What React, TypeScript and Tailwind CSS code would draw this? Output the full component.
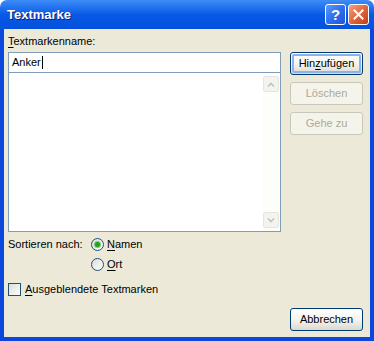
import React from 'react';

const font = { fontFamily: '"Liberation Sans", Arial, sans-serif' };

function XpButton({ label, accessIdx, disabled, isDefault }: { label: string; accessIdx?: number; disabled?: boolean; isDefault?: boolean }) {
  const text =
    accessIdx === undefined ? (
      label
    ) : (
      <>
        {label.slice(0, accessIdx)}
        <span className="underline underline-offset-2">{label[accessIdx]}</span>
        {label.slice(accessIdx + 1)}
      </>
    );
  if (disabled) {
    return (
      <div className="h-[23px] w-[73px] rounded-[3px] border border-[#c9c7ba] bg-[#f5f4ea] flex items-center justify-center text-[11px] text-[#aca899]">
        {text}
      </div>
    );
  }
  return (
    <div className="h-[23px] w-[73px] rounded-[3px] border border-[#003c74] bg-gradient-to-b from-[#ffffff] via-[#f5f4f0] to-[#dcd9cd] p-[1px]">
      <div
        className={`h-full w-full rounded-[2px] flex items-center justify-center text-[11px] text-black ${
          isDefault ? 'border-2 border-[#8fb0ea]' : ''
        }`}
      >
        {text}
      </div>
    </div>
  );
}

function Radio({ checked }: { checked?: boolean }) {
  return (
    <div className="w-[13px] h-[13px] rounded-full border border-[#1c5180] bg-gradient-to-br from-[#dcdcd7] to-[#ffffff] flex items-center justify-center">
      {checked && <div className="w-[5px] h-[5px] rounded-full bg-[#21a121] shadow-[0_0_0_1px_#6fd06f]" />}
    </div>
  );
}

function ScrollArrow({ up }: { up?: boolean }) {
  return (
    <div className="h-[16px] w-[16px] rounded-[2px] border border-[#e6e6de] bg-[#f4f4ef] flex items-center justify-center">
      <svg width="8" height="5" viewBox="0 0 8 5">
        <path
          d={up ? 'M1 4.5L4 1.5L7 4.5' : 'M1 0.5L4 3.5L7 0.5'}
          fill="none"
          stroke="#c3c3bc"
          strokeWidth="1.6"
        />
      </svg>
    </div>
  );
}

export default function App() {
  return (
    <div className="w-[374px] h-[341px] flex flex-col select-none" style={font}>
      {/* Title bar */}
      <div className="h-[29px] rounded-t-[7px] bg-gradient-to-b from-[#3d8cf7] via-[#0859e6] to-[#0451dc] flex items-center pl-[7px] pr-[5px]">
        <span className="text-white font-bold text-[13px] [text-shadow:1px_1px_#0a1c7a]">Textmarke</span>
        <div className="ml-auto flex gap-[2px]">
          <div className="w-[21px] h-[21px] rounded-[3px] border border-white bg-gradient-to-br from-[#5a9bff] via-[#2e6ff0] to-[#1f55d6] flex items-center justify-center">
            <span className="text-white font-bold text-[15px] leading-none">?</span>
          </div>
          <div className="w-[21px] h-[21px] rounded-[3px] border border-white bg-gradient-to-br from-[#f0a283] via-[#e2653e] to-[#c23c16] flex items-center justify-center">
            <svg width="11" height="11" viewBox="0 0 11 11">
              <path d="M1.5 1.5L9.5 9.5M9.5 1.5L1.5 9.5" stroke="white" strokeWidth="2" strokeLinecap="square" />
            </svg>
          </div>
        </div>
      </div>

      {/* Body */}
      <div className="flex-1 border-x-4 border-b-4 border-[#0a47dc] bg-[#ece9d8] flex pl-[4px] pr-[7px] pt-[6px] pb-[6px] text-[11px] text-black">
        {/* Left column */}
        <div className="w-[273px] flex flex-col">
          <div className="h-[13px] leading-[13px]">
            <span className="underline underline-offset-2">T</span>extmarkenname:
          </div>
          <div className="mt-[4px] h-[21px] border border-[#7f9db9] bg-white flex items-center pl-[3px]">
            <span>Anker</span>
            <span className="w-[1px] h-[13px] bg-black ml-[1px]" />
          </div>
          <div className="h-[159px] border border-[#7f9db9] border-t-0 bg-white flex justify-end">
            <div className="w-[17px] h-full py-[3px] pr-[1px] flex flex-col justify-between bg-[#fdfdfa]">
              <ScrollArrow up />
              <ScrollArrow />
            </div>
          </div>

          <div className="mt-[5px] flex">
            <div className="w-[83px] h-[14px] leading-[14px]">Sortieren nach:</div>
            <div className="flex flex-col gap-[6px]">
              <div className="flex items-center gap-[3px] h-[14px]">
                <Radio checked />
                <span className="leading-[14px]">
                  <span className="underline underline-offset-2">N</span>amen
                </span>
              </div>
              <div className="flex items-center gap-[3px] h-[14px]">
                <Radio />
                <span className="leading-[14px]">
                  <span className="underline underline-offset-2">O</span>rt
                </span>
              </div>
            </div>
          </div>

          <div className="mt-[11px] flex items-center gap-[4px] h-[14px]">
            <div className="w-[13px] h-[13px] border border-[#1c5180] bg-gradient-to-br from-[#dcdcd7] to-[#ffffff]" />
            <span>
              <span className="underline underline-offset-2">A</span>usgeblendete Textmarken
            </span>
          </div>
        </div>

        {/* Right column */}
        <div className="ml-[9px] pt-[17px] flex flex-col">
          <div className="flex flex-col gap-[7px]">
            <XpButton label="Hinzufügen" accessIdx={3} isDefault />
            <XpButton label="Löschen" disabled />
            <XpButton label="Gehe zu" disabled />
          </div>
          <div className="mt-auto">
            <XpButton label="Abbrechen" />
          </div>
        </div>
      </div>
    </div>
  );
}
